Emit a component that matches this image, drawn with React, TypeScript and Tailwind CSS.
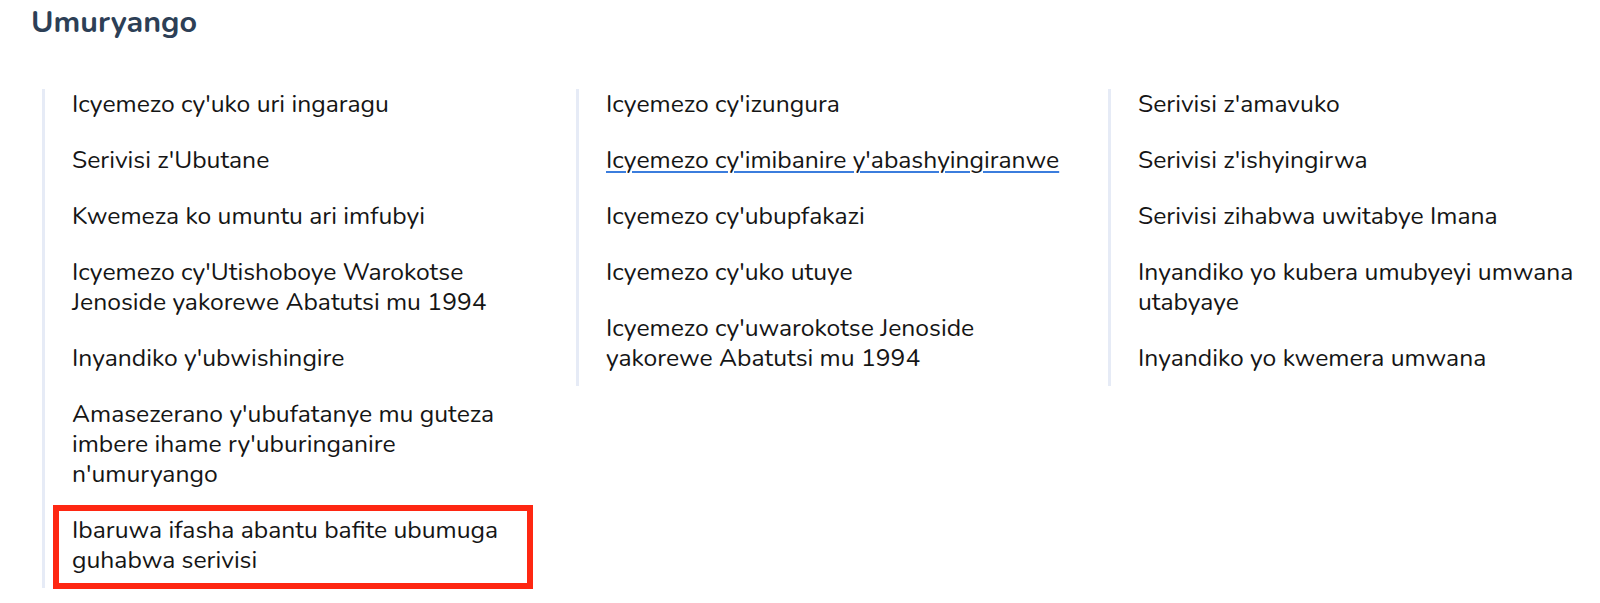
const columns: { label: string; link?: boolean; marked?: boolean }[][] = [
  [
    { label: "Icyemezo cy'uko uri ingaragu" },
    { label: "Serivisi z'Ubutane" },
    { label: "Kwemeza ko umuntu ari imfubyi" },
    { label: "Icyemezo cy'Utishoboye Warokotse Jenoside yakorewe Abatutsi mu 1994" },
    { label: "Inyandiko y'ubwishingire" },
    { label: "Amasezerano y'ubufatanye mu guteza imbere ihame ry'uburinganire n'umuryango" },
    { label: "Ibaruwa ifasha abantu bafite ubumuga guhabwa serivisi", marked: true },
  ],
  [
    { label: "Icyemezo cy'izungura" },
    { label: "Icyemezo cy'imibanire y'abashyingiranwe", link: true },
    { label: "Icyemezo cy'ubupfakazi" },
    { label: "Icyemezo cy'uko utuye" },
    { label: "Icyemezo cy'uwarokotse Jenoside yakorewe Abatutsi mu 1994" },
  ],
  [
    { label: "Serivisi z'amavuko" },
    { label: "Serivisi z'ishyingirwa" },
    { label: "Serivisi zihabwa uwitabye Imana" },
    { label: "Inyandiko yo kubera umubyeyi umwana utabyaye" },
    { label: "Inyandiko yo kwemera umwana" },
  ],
]

export default function App() {
  return (
    <div className="min-h-[603px] bg-white font-['Nunito','Open_Sans',sans-serif] text-[#151515]">
      <h1 className="pl-[31px] pt-[4px] text-[30.5px] leading-[36px] font-bold text-[#2d3f56]">Umuryango</h1>

      <div className="mt-[49px] grid grid-cols-[534px_532px_492px] items-start pl-[42px]">
        {columns.map((items, i) => (
          <ul key={i} className="flex flex-col gap-[26px] border-l-[3px] border-[#e6ebf6] pb-[13px] pl-[27px]">
            {items.map((item) => (
              <li key={item.label} className="relative max-w-[462px] text-[24.7px] leading-[30px]">
                {item.link ? (
                  <a href="#" className="underline decoration-[#3b7ddd] decoration-[1.5px] underline-offset-[3px]">
                    {item.label}
                  </a>
                ) : (
                  item.label
                )}
                {item.marked && (
                  <span className="pointer-events-none absolute left-[-19px] top-[-10px] h-[84px] w-[480px] border-[6px] border-[#fe2712]" />
                )}
              </li>
            ))}
          </ul>
        ))}
      </div>
    </div>
  )
}
